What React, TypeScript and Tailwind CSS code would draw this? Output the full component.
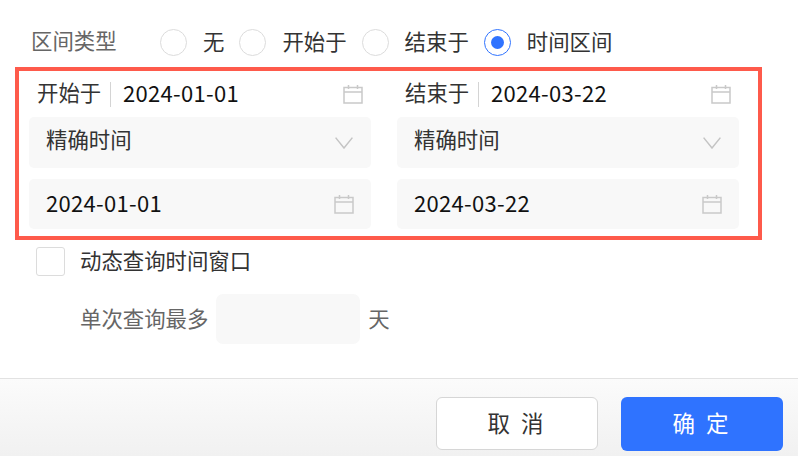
const font = "font-['Noto_Sans_CJK_SC','Noto_Sans',sans-serif]";

function CalendarIcon() {
  return (
    <svg className="w-[20px] h-[20px] shrink-0" viewBox="0 0 20 20" fill="none" stroke="#c9c9c9" strokeWidth={1.5}>
      <path d="M1 3.5h18v15.5H1zM1 8h18M5.5 1v4M14.5 1v4" />
    </svg>
  );
}

function Chevron() {
  return (
    <svg className="w-[18px] h-[12px] shrink-0" viewBox="0 0 18 12" fill="none" stroke="#c4c4c4" strokeWidth={1.5}>
      <path d="M.6.6 9 11 17.4.6" />
    </svg>
  );
}

function Radio({ label, checked }: { label: string; checked?: boolean }) {
  return (
    <div className="flex items-center gap-[16px]">
      <div className={`w-[27px] h-[27px] rounded-full border flex items-center justify-center bg-white ${checked ? 'border-[#2f73ff]' : 'border-[#dcdcdc]'}`}>
        {checked && <div className="w-[13px] h-[13px] rounded-full bg-[#2f73ff]" />}
      </div>
      <span className="text-[#333] mb-[3px]">{label}</span>
    </div>
  );
}

function DateColumn({ label, date }: { label: string; date: string }) {
  return (
    <div className="w-[342px] flex flex-col">
      <div className="h-[46px] flex items-center pl-[8px] pr-[8px]">
        <span className="text-[#333] mb-[4px] w-[63px] whitespace-nowrap">{label}</span>
        <div className="w-px h-[25px] bg-[#d4d4d4] ml-[10px] mr-[12px]" />
        <span className="text-[#111] flex-1 text-[22px] tracking-[0.3px] mb-[4px]">{date}</span>
        <CalendarIcon />
      </div>
      <div className="h-[51px] rounded-[5px] bg-[#f8f8f8] flex items-center justify-between pl-[17px] pr-[18px]">
        <span className="text-[#333] mb-[7px]">精确时间</span>
        <Chevron />
      </div>
      <div className="h-[50px] mt-[11px] rounded-[5px] bg-[#f8f8f8] flex items-center justify-between pl-[17px] pr-[17px]">
        <span className="text-[#111] text-[22px] tracking-[0.3px] mb-[4px]">{date}</span>
        <CalendarIcon />
      </div>
    </div>
  );
}

export default function App() {
  return (
    <div className={`w-[798px] h-[456px] bg-white flex flex-col overflow-hidden text-[21.4px] leading-[28px] ${font}`}>
      <div className="h-[378px] shrink-0 pt-[28px]">
        <div className="flex items-center h-[28px] pl-[31px]">
          <span className="text-[#666] w-[129px] mb-[4px]">区间类型</span>
          <div className="flex items-center gap-[15px]">
            <Radio label="无" />
            <Radio label="开始于" />
            <Radio label="结束于" />
            <Radio label="时间区间" checked />
          </div>
        </div>

        <div className="mt-[11px] ml-[15px] w-[747px] h-[173px] border-4 border-[#fe5a4b] px-[10px] flex gap-[26px]">
          <DateColumn label="开始于" date="2024-01-01" />
          <DateColumn label="结束于" date="2024-03-22" />
        </div>

        <div className="mt-[7px] h-[29px] pl-[36px] flex items-center gap-[15px]">
          <div className="w-[29px] h-[29px] rounded-[3px] border border-[#dcdcdc] bg-white" />
          <span className="text-[#333] mb-[4px]">动态查询时间窗口</span>
        </div>

        <div className="mt-[18px] pl-[80px] flex items-center gap-[8px]">
          <span className="text-[#666] mb-[2px]">单次查询最多</span>
          <div className="w-[144px] h-[50px] rounded-[7px] bg-[#f8f8f8]" />
          <span className="text-[#666] mb-[2px]">天</span>
        </div>
      </div>

      <div className="flex-1 border-t border-[#e2e2e2] bg-gradient-to-b from-[#fbfbfb] to-[#f1f1f1] flex justify-end gap-[23px] pt-[18px] pr-[15px]">
        <button className="w-[162px] h-[53px] pb-[4px] rounded-[6px] border border-[#d6d6d6] bg-white text-[#333] text-[22.5px] tracking-[3px] whitespace-pre">取 消</button>
        <button className="w-[162px] h-[54px] pb-[4px] rounded-[6px] bg-[#2f73ff] text-white text-[22.5px] tracking-[3px] whitespace-pre">确 定</button>
      </div>
    </div>
  );
}
